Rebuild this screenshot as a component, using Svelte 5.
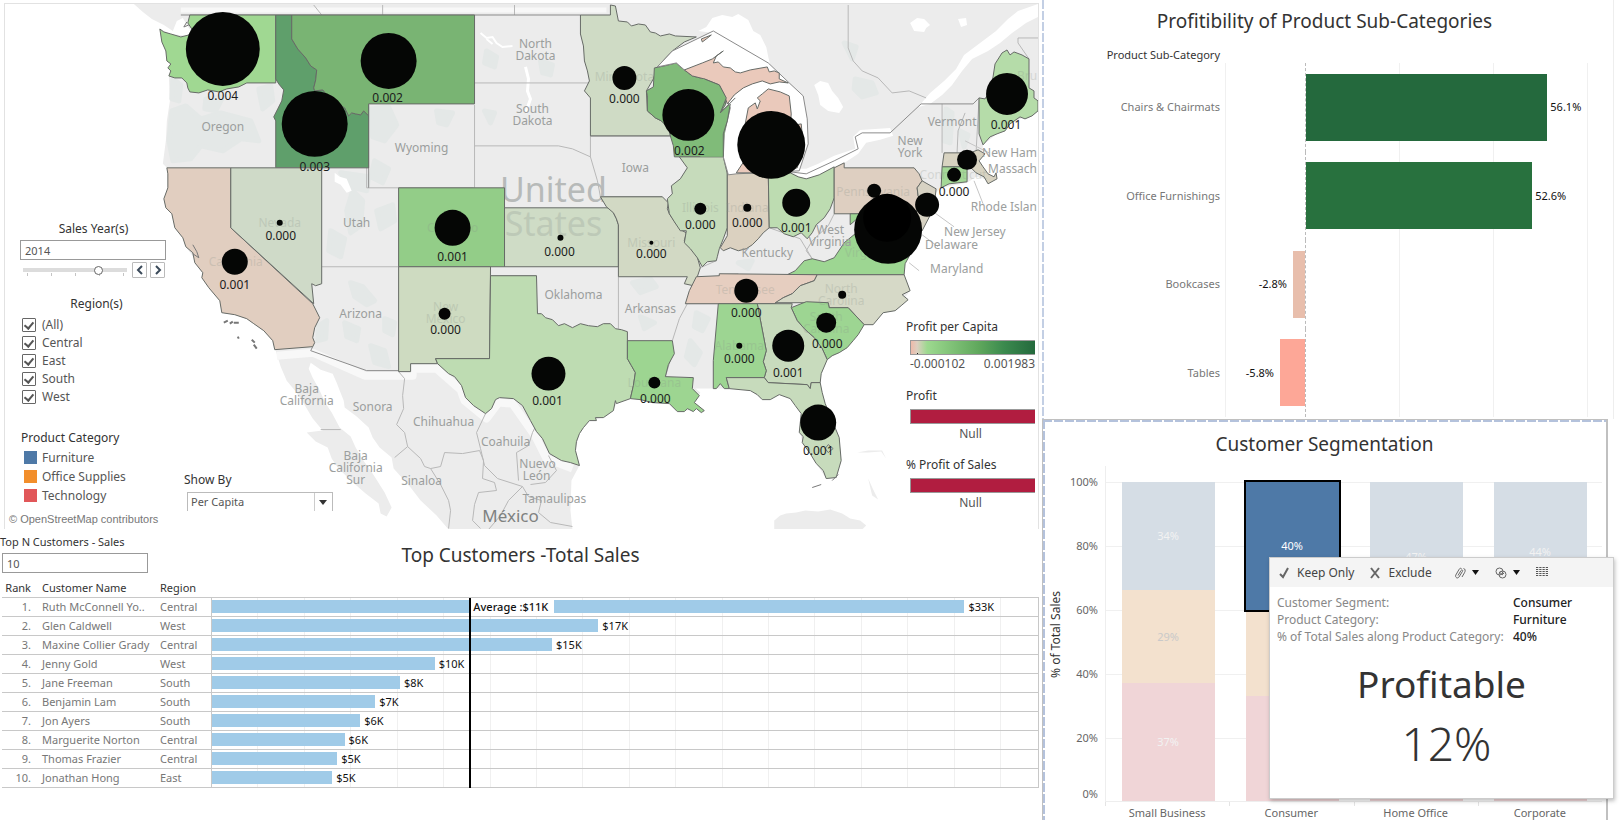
<script>
  const LAND = 'M133 3L142 11L151 18L163 24L172 30L176 20L182 17L186 24L190 30L188 35L170 33L159 28L160 36L165 50L166 60L170 64L168 75L169 100L166 120L165 140L162 163L167 168L167 187L163 198L165 207L171 213L174 227L182 237L185 246L193 257L202 272L201 277L208 287L219 300L221 312L234 314L246 318L253 323L263 330L272 340L275 350L280 366L286 380L295 391L303 403L312 418L322 430L306 432L315 441L327 447L331 458L337 467L350 480L365 493L378 503L380 513L386 516L391 507L384 492L372 473L362 459L355 447L350 436L339 427L331 412L325 403L318 388L312 377L308 368L310 362L320 369L332 373L336 382L339 390L343 400L344 407L356 416L368 427L372 437L379 447L391 457L393 468L410 487L420 500L436 515L448 529L572 529L570 510L571 480L579 465L575 450L579 433L589 420L603 417L613 410L616 403L630 398L652 402L669 403L677 411L687 410L696 408L704 410L694 402L700 392L695 388L713 388L729 388L750 390L762 399L779 394L790 398L801 413L800 432L802 442L816 463L826 478L836 477L841 460L839 437L825 403L820 382L821 373L827 359L839 352L853 340L864 324L873 324L883 312L895 310L910 290L904 274L902 263L912 250L916 240L922 230L934 207L931 197L941 187L967 182L976 176L993 180L988 173L978 163L982 152L983 144L997 133L1010 123L1038 110L1038 3Z';

  const states = [
    { c: '#a0d892', d: 'M159 28L163 31L170 33L180 36L188 34L191 28L187 22L189 14L275 14V82H246L238 86L226 88L218 91L207 89L198 92L189 91L187 87L186 82L181 77L174 77L168 75L170 70L167 67L170 63L166 60L165 50L161 41Z' },
    { c: '#5f9f6b', d: 'M275 14H291V38L297 48L305 57L310 65L316 69L315 79L313 87L314 90L322 89L327 95L331 95L337 103L344 107L348 115L351 112L355 113L360 114L363 110L368 115V167H275V120L273 116L277 108L281 100L283 89L278 83L275 78Z' },
    { c: '#79b473', d: 'M291 14H474V103H368V115L363 110L360 114L355 113L351 112L348 115L344 107L337 103L331 95L327 95L322 89L314 90L313 87L315 79L316 69L310 65L305 57L297 48L291 38Z' },
    { c: '#e1cec0', d: 'M166 167H230V227L312 303L319 317L314 327L312 337L314 342L312 346L274 349L272 340L263 330L253 323L246 318L234 314L221 312L219 300L208 287L201 277L202 272L194 262L192 252L185 246L182 237L174 227L171 213L165 207L163 198L167 187V173Z' },
    { c: '#cfdac8', d: 'M230 167H321V283L315 285L311 283L313 303L230 227Z' },
    { c: '#93cd88', d: 'M398 187H504V266H398Z' },
    { c: '#cfdcc6', d: 'M504 207H612L613 212L616 218L618 224V266H504Z' },
    { c: '#cedbc1', d: 'M398 266H490L489 358H435L437 363H410V371H398Z' },
    { c: '#bedcb2', d: 'M490 275H536L537 313L541 313L545 317L552 319L558 325L564 323L572 327L580 323L588 325L597 326L603 323L610 323L615 328L621 329L627 331V358L631 365L635 372L633 385L630 398L616 403L615 400L613 410L603 417L595 417L596 420L589 420L583 427L579 433L576 441L575 450L579 465L570 462L561 460L549 453L542 438L536 431L530 420L522 405L513 398L499 397L495 399L491 408L485 413L473 405L465 397L461 385L454 376L448 373L437 363L435 358H489Z' },
    { c: '#9dd591', d: 'M627 340H672L674 353L668 364L665 376L693 377L692 388L699 395L694 402L704 410L701 412L696 408L693 411L687 408L684 411L677 411L669 403L652 402L640 399L630 398L633 385L635 372L631 365L627 358Z' },
    { c: '#d2d9c4', d: 'M600 196H662L668 202L667 208L669 213L675 222L682 230L686 232L684 240L690 247L696 253L698 260L700 267L697 276L693 285L684 283L687 276H618V224L616 218L613 212L606 206Z' },
    { c: '#cfdbc5', d: 'M580 14H610V4L615 5L618 20L627 21L631 25L638 23L645 24L650 31L655 32L660 35L669 33L675 35L696 36L684 41L672 50L657 66L653 78L646 90L647 110L655 117L661 120L669 128L670 135H590V97L584 90L589 80L587 70L584 60L583 45L580 33Z' },
    { c: '#80bb79', d: 'M654 67L664 65L676 62L679 65L684 69L692 75L704 78L719 84L723 92L726 97L725 104L720 112L730 103L727 120L724 133L723 156H674L673 145L670 135L669 128L661 120L655 117L647 110V95L646 90L653 86Z' },
    { c: '#c6dbbb', d: 'M679 156H723L727 173V227L723 238L719 248L717 256L716 260L707 261L702 266L697 257L690 248L684 242L686 230L680 230L674 221L669 213L667 198L672 193L671 185L680 178L687 167Z' },
    { c: '#dbd1c0', d: 'M727 172H768L769 227L763 232L758 238L752 244L746 248L738 250L730 247L723 250L720 247L727 235Z' },
    { c: '#bddcb1', d: 'M768 172H790L798 176L806 178L819 174L834 166V197L830 208L824 217L816 224L812 232L807 238L801 232L793 236L784 233L777 227L769 227Z' },
    { c: '#decfc1', d: 'M834 167L844 162V167H914L919 173L922 180L917 187L918 195L922 203L914 213H834Z' },
    { c: '#d7d2c3', d: 'M922 180L936 188L934 207L922 230L915 213L922 203L918 195L917 187Z' },
    { c: '#9dd692', d: 'M850 213L914 213L918 232L912 250L905 263L904 274L787 274L795 270L804 260L812 258L824 261L834 257L844 242L855 233L862 238L870 225L858 217L850 224Z' },
    { c: '#e6cec0', d: 'M696 276L719 275V273L817 274L814 280L800 285L792 293L783 297L775 303H685L689 290Z' },
    { c: '#d6d9c7', d: 'M817 274H904L910 290L902 294L908 299L901 305L895 310L883 312L873 324H864L848 307H829L828 302H775L783 297L792 293L800 285L814 280Z' },
    { c: '#9dd592', d: 'M791 307L806 301L828 302L829 307H848L864 324L858 334L853 340L847 347L839 352L832 355L827 359L822 348L814 337L805 329L797 320Z' },
    { c: '#c8dbbd', d: 'M757 303H792L791 307L797 320L805 329L814 337L822 348L827 359L821 373L820 382H811L810 388L807 384L768 382L764 377L766 370L763 361L766 350Z' },
    { c: '#9dd592', d: 'M718 303H757L766 350L763 361L766 370L764 377H726L729 388L724 388L720 383L716 388H713V360Z' },
    { c: '#c7dbbc', d: 'M726 377H764L768 382L807 384L810 388L811 382H820L822 392L825 403L832 420L839 437L841 460L836 477L826 478L823 470L816 463L810 453L802 442L803 436L799 432L801 413L795 405L790 398L779 394L770 399L762 399L757 394L750 390L729 388Z' },
    { c: '#b5dca9', d: 'M979 97L985 98L990 90L993 76L995 63L1002 52L1007 49L1010 54L1014 51L1022 54L1029 58V87L1034 90L1034 97L1038 100V110L1032 115L1025 118L1020 116L1010 123L1005 130L997 133L990 136L983 144L979 133Z' },
    { c: '#d8d3c1', d: 'M944 152H970L978 149L985 153L979 160L983 166L988 173L994 176L996 172L997 178L988 183L984 176L976 172L970 166H942Z' },
    { c: '#a4d897', d: 'M942 166H967V181L949 183L941 187Z' }
  ];

  const michigan = [
    'M684 69L702 62L712 58L723 50L716 55L713 62L718 61L723 66L730 67L735 71L740 72L750 69L767 66L769 71L774 70L779 72V78L788 82L779 81L770 83L762 80L752 83L743 87L734 94L727 103L724 94L719 84L704 78L692 75Z',
    'M768 88L780 91L789 95L791 113L790 125L801 123L803 145L797 167L768 172H736L744 160L745 146L743 133L748 107L755 102L757 108L760 100L757 97L762 93Z',
    'M701 38L711 34L706 38L702 41Z'
  ];

  const borders = [
    'M366 104V187H473M398 187V266M321 266H398M474 104V187M474 82H589M474 145H558L572 148L590 156',
    'M590 135V156L597 180L600 196M504 187V207M490 275V266M618 276V328M536 275H490M687 303L679 318L672 340M685 303H757M672 353L665 376M769 227L800 238L812 258M834 213L828 225L812 240L806 250L812 258M700 267L716 260M719 274L738 273',
    'M942 103V152M957 152L958 130L965 112M976 152L979 97M398 371L404 378L402 395L403 408L396 424L404 432L407 446L394 457M407 446L420 458L424 466L430 468L440 466L444 452L462 453L479 450M485 413L476 432L480 448L484 465L497 478L522 486M479 450L483 460L482 478L494 482L496 490L478 492L474 504L472 520L480 528M430 468L440 484L448 500L450 510L448 528M522 486L508 500L500 515L488 529M522 486L528 496L541 500L538 512L550 522L572 526M538 420L532 432L528 445L516 452L518 480M320 429H340M548 455L556 470L545 482L530 484',
    'M313 4L321 14M382 4V14M514 4V14M848 4V47L853 60L862 70L878 77L892 92L909 90L926 97M1029 58L1018 42V37H1038M848 258L858 275'
  ];

  const names = [
    [535, 47, 'North'], [535, 59, 'Dakota'], [532, 112, 'South'], [532, 124, 'Dakota'], [222, 130, 'Oregon'],
    [421, 151, 'Wyoming'], [356, 226, 'Utah'], [360, 317, 'Arizona'], [306, 392, 'Baja'], [306, 404, 'California'],
    [372, 410, 'Sonora'], [443, 425, 'Chihuahua'], [505, 445, 'Coahuila'], [355, 459, 'Baja'], [355, 471, 'California'],
    [355, 483, 'Sur'], [421, 484, 'Sinaloa'], [537, 467, 'Nuevo'], [536, 479, 'León'], [554, 502, 'Tamaulipas'],
    [573, 298, 'Oklahoma'], [650, 312, 'Arkansas'], [635, 171, 'Iowa'], [767, 256, 'Kentucky'], [830, 233, 'West'],
    [830, 245, 'Virginia'], [910, 144, 'New'], [910, 156, 'York'], [952, 125, 'Vermont']
  ];
  const coastNames = [[944, 235, 'New Jersey'], [925, 248, 'Delaware'], [930, 272, 'Maryland']];
  const edgeNames = [[156, 'New Ham'], [172, 'Massach'], [210, 'Rhode Islan']];
  const faintNames = [
    [279, 226, 'Nevada'], [235, 265, 'California'], [452, 231, 'Colorado'], [445, 310, 'New'], [445, 322, 'Mexico'],
    [624, 80, 'Minnesota'], [651, 246, 'Missouri'], [700, 211, 'Illinois'], [747, 211, 'Indiana'], [873, 195, 'Pennsylvania'],
    [866, 256, 'Virginia'], [745, 293, 'Tennessee'], [841, 292, 'North'], [841, 304, 'Carolina'], [826, 320, 'South'],
    [826, 332, 'Carolina'], [739, 349, 'Alabama'], [654, 386, 'Louisiana'], [953, 178, 'Connecticut'], [1027, 79, 'Bru']
  ];

  const marks = [
    [222, 48, 37], [388, 60, 28], [314, 123, 33], [234, 261, 13], [279, 222, 3], [452, 227, 18], [444, 313, 6],
    [548, 373, 17], [654, 382, 6], [560, 237, 3], [651, 242, 2], [700, 208, 6], [747, 207, 4], [796, 202, 14],
    [874, 190, 7], [888, 229, 34], [927, 204, 12], [954, 174, 7], [967, 159, 10], [1007, 93, 21], [746, 290, 12],
    [842, 294, 4], [826, 322, 10], [739, 345, 3], [788, 345, 16], [818, 422, 18], [688, 114, 26], [624, 77, 12], [771, 144, 34]
  ];
  const values = [
    [222, 99, '0.004'], [387, 101, '0.002'], [314, 170, '0.003'], [280, 239, '0.000'], [234, 288, '0.001'],
    [452, 260, '0.001'], [445, 333, '0.000'], [547, 404, '0.001'], [655, 402, '0.000'], [559, 255, '0.000'],
    [651, 257, '0.000'], [700, 228, '0.000'], [747, 226, '0.000'], [796, 231, '0.001'], [624, 102, '0.000'],
    [689, 154, '0.002'], [1006, 128, '0.001'], [954, 195, '0.000'], [746, 316, '0.000'], [827, 347, '0.000'],
    [739, 362, '0.000'], [788, 376, '0.001'], [818, 454, '0.001']
  ];

  const terrain = [
    'M171 110L185 105L200 118L220 112L250 120L258 140L240 138L222 150L200 145L190 158L172 160L168 140Z',
    'M172 78L180 84L178 100L171 98Z', 'M205 98L222 96L215 110L204 108Z', 'M258 88L270 85L272 100L262 108Z',
    'M370 108L388 106L396 124L384 140L372 136Z', 'M436 110L452 112L446 124L438 122Z', 'M374 160L388 168L382 182L370 176Z',
    'M340 172L368 176L366 190L350 186Z', 'M352 190L362 200L360 225L350 232L346 210Z', 'M376 210L392 204L394 220L380 228Z',
    'M330 230L344 238L340 256L328 250Z', 'M350 282L362 286L374 300L366 304L354 296Z', 'M318 325L326 320L325 338L317 340Z',
    'M344 322L358 328L356 340L346 336Z', 'M370 345L384 350L388 366L374 362Z', 'M384 318L394 322L392 334L384 330Z',
    'M486 50L496 56L494 66L484 62Z', 'M540 60L552 64L550 74L542 72Z', 'M484 110L494 112L490 122Z',
    'M632 282L650 278L656 286L640 292Z', 'M640 316L654 322L644 328Z', 'M690 340L700 352L694 364L686 356Z',
    'M696 312L708 318L702 330L694 326Z', 'M855 78L872 82L876 92L862 96L854 88Z', 'M738 262L752 260L748 268Z',
    'M946 108L952 112L950 142L944 140Z', 'M960 130L968 134L964 146Z', 'M844 42L856 46L852 58Z'
  ];

  const regions = ['(All)', 'Central', 'East', 'South', 'West'];
  const categories = [['Furniture', '#4e79a7'], ['Office Supplies', '#f28e2b'], ['Technology', '#e15759']];

  const customers = [
    ['Ruth McConnell Yo..', 'Central', 91.1, '$33K'],
    ['Glen Caldwell', 'West', 46.8, '$17K'],
    ['Maxine Collier Grady', 'Central', 41.2, '$15K'],
    ['Jenny Gold', 'West', 27, '$10K'],
    ['Jane Freeman', 'South', 22.8, '$8K'],
    ['Benjamin Lam', 'South', 19.8, '$7K'],
    ['Jon Ayers', 'South', 18, '$6K'],
    ['Marguerite Norton', 'Central', 16.1, '$6K'],
    ['Thomas Frazier', 'Central', 15.2, '$5K'],
    ['Jonathan Hong', 'East', 14.6, '$5K']
  ];

  const profits = [
    ['Chairs & Chairmats', 56.1, '#24693d'],
    ['Office Furnishings', 52.6, '#28713e'],
    ['Bookcases', -2.8, '#e8beac'],
    ['Tables', -5.8, '#fda797']
  ];

  const segments = [
    { name: 'Small Business', parts: [34, 29, 37], labels: ['34%', '29%', '37%'] },
    { name: 'Consumer', parts: [40, 27, 33], labels: ['40%'], selected: true },
    { name: 'Home Office', parts: [47, 22, 31], labels: ['47%'] },
    { name: 'Corporate', parts: [44, 26, 30], labels: ['44%'] }
  ];
  const axis = ['100%', '80%', '60%', '40%', '20%', '0%'];
</script>

<main class="page">
  <div class="left">
    <section class="map">
      <svg class="geo" viewBox="4 3 1034 526" role="img" aria-label="Profit per capita by state">
        <path d={LAND} fill="#ececec" />
        {#each terrain as d}<path {d} fill="#e4e8e7" stroke="#e4e8e7" stroke-width="5" stroke-linejoin="round" />{/each}
        <g fill="none" stroke="#f8f8f8" stroke-width="8" stroke-linejoin="round">
          <path d="M180 9H606" stroke-width="5" />
          <path d="M276 355L312 352L364 375H412V368H436L460 389L464 400L486 418L498 402L512 403L535 436L546 458L572 468" />
        </g>
        <g fill="#fff">
          <path d="M698 30L706 26L712 17L722 14L732 16L738 13L748 19L753 30L760 34L766 46L768 56L770 64L713 32Z" />
          <path d="M918 106L930 92L944 80L956 68L964 54L980 42L996 30L1008 18L1018 10L1038 3V16L1026 22L1012 32L1000 42L988 50L972 58L962 70L952 84L942 94L930 103Z" />
          <path d="M814 84L820 80L828 82L832 90L838 97L843 106L839 112L828 110L820 104L818 94Z" />
          <path d="M910 22L917 17L924 18L930 24L926 27L924 31L914 30Z" /><path d="M958 18L966 17L967 24L961 26Z" />
          <path d="M788 168L806 168L818 163L834 155L855 148L853 136L860 129L890 127L893 135L880 139L866 142L858 153L846 161L834 168L820 177L806 181Z" />
          <path d="M334 172L339 176L346 178L351 190L346 192L340 184L334 181Z" />
          <path d="M480 32L486 37L492 36L496 42L502 46L512 45M486 38L492 43" stroke="#fff" stroke-width="2" fill="none" />
          <path d="M525 66L528 78L527 90L530 98L525 112" stroke="#fff" stroke-width="3" fill="none" />
        </g>
        <g fill="none" stroke="#b8b8b8">{#each borders as d}<path {d} />{/each}</g>
        <g fill="none" stroke="#8c8c8c">
          <path d="M180 14H580M368 104V187M312 346L310 350L366 370H398" />
          <path d="M973 103H921L890 132H862L855 136L858 148L834 160L806 173L790 171M973 103L979 97M590 135H670M600 196H662" />
        </g>
        <text x="553" y="201" font-size="34" fill="#b7bab9" text-anchor="middle">United</text>
        <g stroke="#666a66" stroke-linejoin="round">
          {#each states as s}<path d={s.d} fill={s.c} />{/each}
          <path d="M657 66L672 50L713 30L768 62L789 82L803 95L807 118L808 143L799 170L736 173L728 174L723 156L724 133L730 107L718 80L684 69L676 62Z" fill="#fff" stroke="#8a8a8a" />
          {#each michigan as d}<path {d} fill="#eac9bb" />{/each}
        </g>
        <path d="M704 78L719 84L726 97L720 112L730 103L727 120L724 133L723 156H700V78Z" fill="#80bb79" />
        <path d="M704 78L719 84L726 97L720 112L735 97M730 103L727 120L723 133V156" fill="none" stroke="#666a66" />
        <g fill="none" stroke="#777"><path d="M223 322L227 320M229 323L232 321M233 322H238M237 336L238 338M251 339L254 342M253 344L256 348" stroke-width="2" /><path d="M186 21L183 26L188 24M192 244L196 251L198 257L192 253M832 480L838 474M812 487L821 484M828 444L833 448L828 452L825 448Z" /></g>
        <g fill="none" stroke="#c5c5c5"><path d="M965 140L989 152M974 180L983 203M936 213L954 226M922 234L938 246M909 262L919 270" /></g>
        <g fill="#ececec">
          <path d="M774 520L780 515L786 513L796 512L805 510L818 511L830 509L842 513L850 518L860 520L866 525L862 529H774Z" /><path d="M868 478L873 489L878 499L872 495Z" />
          <path d="M857 452L868 450L882 450L886 458L881 451L868 452Z" />
        </g>
        <text x="553" y="235" font-size="34" fill="#9da79d" opacity="0.35" text-anchor="middle">States</text>
        <g fill="#8b948b" opacity="0.25" text-anchor="middle">{#each faintNames as [x, y, t]}<text {x} {y}>{t}</text>{/each}</g>
        <g fill="#9b9e9d" text-anchor="middle">
          {#each names as [x, y, t]}<text {x} {y}>{t}</text>{/each}
          <text x="510" y="522" font-size="17" fill="#7f8281">México</text>
        </g>
        <g fill="#9b9e9d">{#each coastNames as [x, y, t]}<text {x} {y}>{t}</text>{/each}</g>
        <g fill="#9b9e9d" text-anchor="end">{#each edgeNames as [y, t]}<text x="1037" {y}>{t}</text>{/each}</g>
        <g fill="#050605">{#each marks as [cx, cy, r]}<circle {cx} {cy} {r} />{/each}</g>
        <circle cx="887" cy="217" r="24" fill="#000" />
        <g fill="#1c1c1c" text-anchor="middle">{#each values as [x, y, t]}<text {x} {y}>{t}</text>{/each}</g>
      </svg>

      <form class="filters">
        <label class="center" for="year">Sales Year(s)</label>
        <input id="year" class="box" type="text" value="2014" />
        <div class="slide">
          <input type="range" aria-label="Sales year" min="2011" max="2015" step="1" value="2014" />
          <button type="button" aria-label="Previous year"><svg width="8" height="10" viewBox="0 0 8 10"><path d="M6 1L2 5L6 9" /></svg></button>
          <button type="button" aria-label="Next year"><svg width="8" height="10" viewBox="0 0 8 10"><path d="M2 1L6 5L2 9" /></svg></button>
        </div>
        <fieldset>
          <legend>Region(s)</legend>
          {#each regions as r}<label class="tick"><input type="checkbox" checked />{r}</label>{/each}
        </fieldset>
        <div class="cats">
          <strong>Product Category</strong>
          {#each categories as [name, color]}<span><i style="background:{color}"></i>{name}</span>{/each}
        </div>
        <a class="osm" href="#osm">© OpenStreetMap contributors</a>
      </form>

      <div class="showby">
        <label for="show">Show By</label>
        <div class="pick">
          <select id="show"><option>Per Capita</option><option>Total</option></select>
          <svg width="8" height="5" viewBox="0 0 8 5"><path d="M0 0H8L4 5Z" fill="#333" /></svg>
        </div>
      </div>

      <aside class="legends">
        <div class="legend">
          <strong>Profit per Capita</strong>
          <div class="ramp"></div>
          <div class="ends"><span>-0.000102</span><span>0.001983</span></div>
        </div>
        <div class="legend"><strong>Profit</strong><div class="ramp null"></div><div class="none">Null</div></div>
        <div class="legend"><strong>% Profit of Sales</strong><div class="ramp null"></div><div class="none">Null</div></div>
      </aside>
    </section>

    <section class="customers">
      <div class="head">
        <div class="topn"><label for="topn">Top N Customers - Sales</label><input id="topn" class="box" type="text" value="10" /></div>
        <h2>Top Customers -Total Sales</h2>
      </div>
      <table>
        <colgroup><col class="c1" /><col class="c2" /><col class="c3" /><col /></colgroup>
        <thead><tr><th>Rank</th><th>Customer Name</th><th>Region</th><th></th></tr></thead>
        <tbody>
          {#each customers as [name, region, width, label], i}
            <tr>
              <td class="rank">{i + 1}.</td><td>{name}</td><td>{region}</td>
              <td class="chart">
                <div class="track">
                  <div class="bar" style="width:{width}%"></div><span>{label}</span>
                  <div class="avg">{#if i === 0}<b>Average :$11K</b>{/if}</div>
                </div>
              </td>
            </tr>
          {/each}
        </tbody>
      </table>
    </section>
  </div>

  <div class="right">
    <section class="profit">
      <h2>Profitibility of Product Sub-Categories</h2>
      <div class="subhead">Product Sub-Category</div>
      <div class="plot">
        {#each profits as [name, v, color]}
          <div class="name">{name}</div>
          <div class="neg">{#if v < 0}<span>{v}%</span><div style="width:{-v * 5.07}%;background:{color}"></div>{/if}</div>
          <div class="pos">{#if v > 0}<div style="width:{v * 1.52}%;background:{color}"></div><span>{v}%</span>{/if}</div>
        {/each}
      </div>
    </section>

    <section class="segment">
      <h2>Customer Segmentation</h2>
      <div class="stack">
        <div class="ytitle">% of Total Sales</div>
        <div class="yaxis">{#each axis as a}<span>{a}</span>{/each}</div>
        <div class="cols">
          {#each segments as s}
            <div class="col">
              <div class="pile">
                {#each s.parts as p, i}
                  <div class="part p{i}" class:sel={s.selected && i === 0} style="height:{p}%">{s.labels[i] ?? ''}</div>
                {/each}
              </div>
            </div>
          {/each}
        </div>
        <div class="xaxis">{#each segments as s}<span>{s.name}</span>{/each}</div>
      </div>

      <div class="tip" role="dialog" aria-label="Mark details">
        <div class="tools">
          <button type="button"><svg width="10" height="12" viewBox="0 0 10 12"><path d="M1 7L4 10L9 1" /></svg>Keep Only</button>
          <button type="button"><svg width="10" height="12" viewBox="0 0 10 12"><path d="M1 1L9 11M9 1L1 11" /></svg>Exclude</button>
          <button type="button" class="g" aria-label="Group"><svg width="12" height="12" viewBox="0 0 12 12"><path class="thin" d="M4 8.500L7 3.500C7.800 2.200 9.200 3 8.500 4.300L5 10C3.600 12 .8 10.500 1.800 8L5 2.500C5.600 1.300 6.800 1 7.500 1.500M9.500 1.500C11.500 1.800 11.500 4 10.500 5.700L8 10" /></svg><svg width="7" height="5" viewBox="0 0 7 5"><path class="fill" d="M0 0H7L3.500 5Z" /></svg></button>
          <button type="button" class="s" aria-label="Create set"><svg width="12" height="12" viewBox="0 0 12 12"><circle class="thin" cx="4.500" cy="4.500" r="3.500" /><circle class="thin" cx="7.500" cy="7.500" r="3.500" /><path class="thin" d="M4 5L8 8M6 4L9 7" /></svg><svg width="7" height="5" viewBox="0 0 7 5"><path class="fill" d="M0 0H7L3.500 5Z" /></svg></button>
          <button type="button" aria-label="View data"><svg width="12" height="11" viewBox="0 0 12 11"><path class="grid" d="M0 .5H12M0 2.500H12M0 4.500H12M0 6.500H12M0 8.500H12" stroke-dasharray="2.250 1" /></svg></button>
        </div>
        <dl>
          <dt>Customer Segment:</dt><dd>Consumer</dd>
          <dt>Product Category:</dt><dd>Furniture</dd>
          <dt>% of Total Sales along Product Category:</dt><dd>40%</dd>
        </dl>
        <div class="verdict">Profitable</div>
        <div class="figure">12%</div>
      </div>
    </section>
  </div>
</main>

<style>
  :global(body) { background: #fff; }
  .page, .page * { box-sizing: border-box; }
  .page { display: grid; grid-template-columns: 1042fr 581fr; min-height: 820px; overflow: hidden; font: 12px/16px "Noto Sans", sans-serif; color: #333; }
  h2 { margin: 0; font-size: 19px; line-height: 24px; font-weight: 400; text-align: center; color: #333; }
  strong { font-weight: 400; }
  input, select, button { font: inherit; color: #555; }
  .box { height: 20px; border: 1px solid #999; padding: 0 4px; background: #fff; width: 146px; font-size: 11px; }

  .map { display: grid; grid-template-columns: 1fr; margin: 3px 3px 0 4px; border: 1px solid #e2e2e2; border-bottom: 0; }
  .map > * { grid-area: 1 / 1; }
  .geo { display: block; width: 100%; height: auto; font-size: 12px; }
  .filters { align-self: end; justify-self: start; width: 162px; padding: 0 0 2px 15px; display: flex; flex-direction: column; }
  .center { text-align: center; margin-bottom: 3px; }
  .slide { display: flex; align-items: center; gap: 3px; height: 16px; margin-top: 2px; }
  .slide input { appearance: none; width: 104px; height: 14px; margin: 0 2px 0 3px; background: linear-gradient(#dcdcdc, #dcdcdc) 0 5px / 100% 4px no-repeat, repeating-linear-gradient(90deg, transparent 0 4px, #c4c4c4 4px 5px, transparent 5px 24px) 0 10px / 100% 3px no-repeat; }
  .slide input::-webkit-slider-thumb { appearance: none; width: 9px; height: 9px; border-radius: 50%; border: 1px solid #666; background: #fff; }
  .slide button { width: 15px; height: 16px; padding: 0; border: 1px solid #bbb; background: #fff; display: grid; place-items: center; border-radius: 1px; }
  .slide path { fill: none; stroke: #3b4a5a; stroke-width: 2; }
  fieldset { border: 0; margin: 18px 0 0; padding: 0 0 0 2px; display: flex; flex-direction: column; }
  legend { padding: 0 0 0 4px; width: 100%; text-align: center; margin-bottom: 4px; }
  .tick { display: flex; align-items: center; gap: 6px; height: 18px; color: #555; }
  .tick input { appearance: none; width: 14px; height: 14px; margin: 0; border: 1px solid #666; border-radius: 1px; display: grid; place-items: center; }
  .tick input::after { content: ""; width: 4px; height: 7px; border: solid #555; border-width: 0 2px 2px 0; transform: translateY(-1px) rotate(40deg); }
  .cats { display: flex; flex-direction: column; margin-top: 24px; padding-left: 1px; }
  .cats strong { margin-bottom: 2px; }
  .cats span { display: flex; align-items: center; height: 19px; gap: 5px; padding-left: 3px; color: #555; }
  .cats i { width: 13px; height: 13px; }
  .osm { font: 11px/16px "Liberation Sans", sans-serif; color: #777; text-decoration: none; margin: 6px 0 0 -11px; white-space: nowrap; }
  .showby { align-self: end; justify-self: start; margin: 0 0 18px 179px; display: flex; flex-direction: column; }
  .pick { width: 146px; margin: 4px 0 0 3px; display: grid; grid-template-columns: 1fr 18px; align-items: center; border: 1px solid #bbb; border-bottom: 0; background: #fff; }
  .pick > * { grid-row: 1; }
  .pick svg { grid-column: 2; justify-self: center; pointer-events: none; z-index: 1; }
  .pick select { grid-column: 1 / 3; appearance: none; width: 100%; height: 18px; border: 0; background: linear-gradient(#ccc, #ccc) right 17px top / 1px 100% no-repeat; padding: 0 3px; font-size: 11px; }
  .legends { align-self: end; justify-self: end; width: 129px; margin: 0 3px 23px 0; display: flex; flex-direction: column; gap: 20px; }
  .legend strong { display: block; margin-bottom: 5px; }
  .ramp { height: 15px; margin-left: 4px; border: 1px solid #999; border-right: 0; background: linear-gradient(#222, #222) 6px 12px / 1px 4px no-repeat, linear-gradient(90deg, #eebaa9, #dccfc0 5%, #9dd98f 13%, #5fa75c 55%, #3b8a4e 75%, #24693d); }
  .ramp.null { background: #b11d40; }
  .ends { display: flex; justify-content: space-between; padding-left: 4px; height: 13px; line-height: 18px; color: #555; }
  .none { text-align: center; height: 13px; line-height: 20px; color: #555; }

  .customers { padding: 5px 3px 0 0; }
  .head { display: grid; grid-template-columns: 1fr; }
  .head > * { grid-area: 1 / 1; }
  .head h2 { margin-top: 9px; padding-left: 2px; }
  .topn { display: flex; flex-direction: column; justify-self: start; gap: 3px; font-size: 11px; }
  .topn .box { margin-left: 2px; }
  table { border-collapse: collapse; table-layout: fixed; width: calc(100% - 2px); margin: 6px 0 0 2px; color: #777; }
  .c1 { width: 32px; } .c2 { width: 118px; } .c3 { width: 59px; }
  th { font-weight: 400; text-align: left; color: #333; font-size: 11px; height: 18px; padding: 0 0 0 8px; white-space: nowrap; }
  th:first-child { padding: 0 3px 0 0; text-align: right; }
  td { padding: 0 0 0 8px; height: 19px; line-height: 18px; border: solid #c8c8c8; border-width: 1px 0; white-space: nowrap; font-size: 11px; }
  td.rank { text-align: right; padding: 0 3px 0 0; }
  td.chart { padding: 0; border-width: 1px; }
  .track { position: relative; display: flex; align-items: center; gap: 4px; height: 18px; color: #111; background: repeating-linear-gradient(90deg, transparent 0 calc(5.62% - 1px), #f0f0f0 calc(5.62% - 1px) 5.62%); }
  .bar { height: 13px; background: #a0cbe8; flex: none; }
  .avg { position: absolute; left: 31.2%; top: 0; height: 19px; border-left: 2px solid #000; }
  .avg b { display: block; background: #fff; height: 18px; padding: 0 6px 0 2px; font-size: 11px; font-weight: 500; }

  .right { display: flex; flex-direction: column; padding-right: 9px; }
  .profit { height: 419px; padding: 9px 0 0 22px; border-right: 1px solid #eee; background: repeating-linear-gradient(#c3cfe4 0 9px, #fff 9px 11px) left top / 2px 100% no-repeat; display: flex; flex-direction: column; }
  .profit h2 { padding-right: 28px; }
  .subhead { width: 156px; text-align: right; font-size: 11px; margin: 14px 0 0; line-height: 16px; }
  .plot { flex: 1; margin: 0 24px 2px 0; display: grid; grid-template-columns: 156px 85fr 284fr; grid-template-rows: repeat(4, 1fr); background: linear-gradient(90deg, #f0f0f0 1px, transparent 1px) 161px 0 / 400px 100% no-repeat; }
  .name { align-self: center; text-align: right; color: #777; font-size: 11px; }
  .neg, .pos { display: flex; align-items: center; font-size: 11px; color: #111; white-space: nowrap; }
  .neg { justify-content: flex-end; gap: 6px; }
  .pos { gap: 3px; border-left: 1px dashed #bbb; background: repeating-linear-gradient(90deg, transparent 0 93px, #f0f0f0 93px 94px); }
  .pos > div, .neg > div { height: 67px; flex: none; }

  .segment { position: relative; flex: 1; margin-right: 6px; border: solid #c0c0c0; border-width: 1px 2px 0 1px; padding: 12px 4px 0 6px; background: repeating-linear-gradient(90deg, #b4c2dc 0 9px, #fff 9px 11px) left top / 100% 2px no-repeat, repeating-linear-gradient(#b4c2dc 0 9px, #fff 9px 11px) left top / 2px 100% no-repeat; }
  .segment h2 { padding-right: 2px; }
  .stack { display: grid; grid-template-columns: 14px 35px 1fr; margin-top: 10px; }
  .ytitle { writing-mode: vertical-rl; transform: rotate(180deg); justify-self: center; align-self: center; line-height: 14px; font-size: 12px; }
  .yaxis { display: grid; grid-template-rows: repeat(4, 64px) 56px 16px; text-align: right; color: #666; font-size: 11px; padding-top: 8px; }
  .cols { margin-left: 7px; border-left: 1px solid #eee; border-bottom: 1px solid #eee; padding-top: 16px; height: 336px; display: grid; grid-template-columns: repeat(4, 1fr); background: repeating-linear-gradient(#f0f0f0 0 1px, transparent 1px 64px) 0 16px / 100% 100% no-repeat; }
  .col { display: flex; justify-content: center; }
  .pile { width: 75%; display: flex; flex-direction: column; }
  .part { display: grid; place-items: center; font-size: 11px; color: #f2f2f2; }
  .p0 { background: #d5dde5; }
  .p1 { background: #f3e1ce; color: #c9c9c9; }
  .p2 { background: #f0d5d7; }
  .sel { background: #4e79a7; outline: 2px solid #000; z-index: 1; color: #fff; }
  .xaxis { grid-column: 3; margin-left: 7px; display: grid; grid-template-columns: repeat(4, 1fr); text-align: center; font-size: 11px; line-height: 15px; color: #666; }
  .xaxis span { padding-top: 3px; background: linear-gradient(#e4e4e4, #e4e4e4) left top / 1px 4px no-repeat; }

  .tip { position: absolute; z-index: 3; top: 137px; right: -8px; width: 345px; height: 242px; background: #fff; border: 1px solid #ccc; box-shadow: 1px 2px 4px rgba(0, 0, 0, .25); }
  .tools { display: flex; align-items: center; height: 29px; background: #f4f4f4; padding-left: 9px; gap: 16px; }
  .tools button { display: flex; align-items: center; gap: 8px; border: 0; padding: 0; background: none; color: #444; font-size: 12px; white-space: nowrap; }
  .tools button.g { margin-left: 6px; } .tools button.g, .tools button.s { gap: 6px; }
  .tools path, .tools circle { fill: none; stroke: #666; stroke-width: 2; }
  .tools .thin { stroke-width: 1; }
  .tools .grid { stroke: #555; stroke-width: 1; }
  .tools .fill { fill: #111; stroke: none; }
  dl { display: grid; grid-template-columns: 236px 1fr; margin: 7px 0 0 7px; line-height: 17px; white-space: nowrap; }
  dt { color: #888; }
  dd { margin: 0; color: #222; font-weight: 500; }
  .verdict { text-align: center; font-size: 37px; line-height: 48px; margin-top: 15px; }
  .figure { text-align: center; font-size: 46px; line-height: 60px; font-weight: 300; margin: 5px 0 0 10px; }
</style>
